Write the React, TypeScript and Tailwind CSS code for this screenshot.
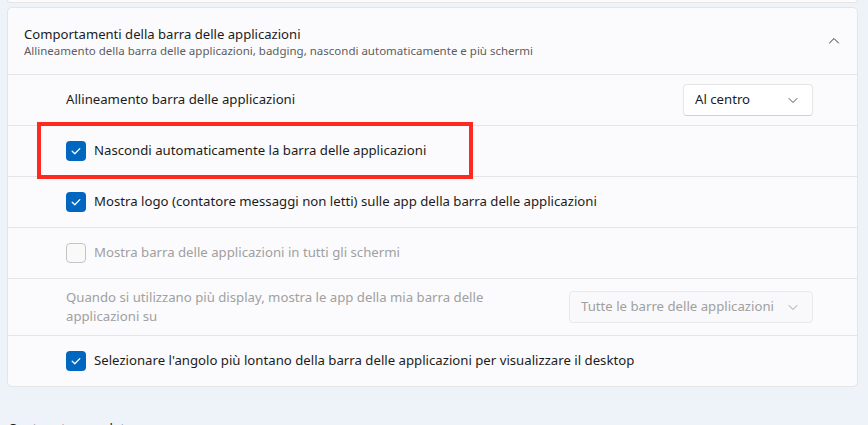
import React from "react";

// Impostazioni > Barra delle applicazioni — sezione "Comportamenti"

const FONT = "font-['Segoe_UI','Noto_Sans',sans-serif]";

function CheckIcon() {
  return (
    <svg width="12" height="12" viewBox="0 0 12 12" fill="none">
      <path d="M2.2 6.3 L4.8 8.8 L9.8 3.6" stroke="white" strokeWidth="1.3" strokeLinecap="round" strokeLinejoin="round" />
    </svg>
  );
}

function Chevron({ up = false, className = "" }: { up?: boolean; className?: string }) {
  return (
    <svg width="12" height="12" viewBox="0 0 12 12" fill="none" className={className}>
      <path
        d={up ? "M1.5 8 L6 3.5 L10.5 8" : "M2 4.5 L6 8.5 L10 4.5"}
        stroke="currentColor"
        strokeWidth="1"
        strokeLinecap="round"
        strokeLinejoin="round"
      />
    </svg>
  );
}

function Checkbox({ checked, disabled }: { checked: boolean; disabled?: boolean }) {
  if (checked) {
    return (
      <div className="w-5 h-5 rounded-[4px] bg-[#0067c0] flex items-center justify-center shrink-0">
        <CheckIcon />
      </div>
    );
  }
  return (
    <div
      className={
        "w-5 h-5 rounded-[4px] border shrink-0 " +
        (disabled ? "border-[#c4c4c4] bg-[#f9f9f9]" : "border-[#8a8a8a] bg-white")
      }
    />
  );
}

function CheckRow({ label, checked, disabled }: { label: string; checked: boolean; disabled?: boolean }) {
  return (
    <div className="h-[51px] border-t border-[#e5e5e5] flex items-center pl-[58px] gap-[8px]">
      <Checkbox checked={checked} disabled={disabled} />
      <span className={"text-[13.2px] " + (disabled ? "text-[#a0a0a0]" : "text-[#1b1b1b]")}>{label}</span>
    </div>
  );
}

export default function App() {
  return (
    <div className={"w-[868px] h-[425px] overflow-hidden bg-[#eef2f9] relative " + FONT}>
      {/* fine della scheda precedente */}
      <div className="ml-[7px] w-[851px] h-[3px] bg-[#fbfbfd] border-b border-x border-[#e5e5e5] rounded-b-[4px]" />

      <div className="ml-[7px] mt-[4px] w-[851px] bg-[#fbfbfd] border border-[#e5e5e5] rounded-[5px]">
        {/* intestazione */}
        <div className="h-[66px] flex items-center pl-[16px] pr-[17px]">
          <div className="flex-1 pt-[1px]">
            <div className="text-[13.1px] leading-[18px] text-[#1b1b1b]">Comportamenti della barra delle applicazioni</div>
            <div className="text-[11.5px] leading-[16px] text-[#5d5d5d]">
              Allineamento della barra delle applicazioni, badging, nascondi automaticamente e più schermi
            </div>
          </div>
          <Chevron up className="text-[#333]" />
        </div>

        {/* allineamento */}
        <div className="h-[51px] border-t border-[#e5e5e5] flex items-center pl-[58px] pr-[44px]">
          <span className="flex-1 text-[13.2px] text-[#1b1b1b]">Allineamento barra delle applicazioni</span>
          <div className="w-[130px] h-[32px] rounded-[4px] bg-white border border-[#e5e5e5] border-b-[#d0d0d0] flex items-center pl-[11px] pr-[13px]">
            <span className="flex-1 text-[13.2px] text-[#1b1b1b]">Al centro</span>
            <Chevron className="text-[#555]" />
          </div>
        </div>

        <CheckRow label="Nascondi automaticamente la barra delle applicazioni" checked />
        <CheckRow label="Mostra logo (contatore messaggi non letti) sulle app della barra delle applicazioni" checked />
        <CheckRow label="Mostra barra delle applicazioni in tutti gli schermi" checked={false} disabled />

        {/* più display */}
        <div className="h-[57px] border-t border-[#e5e5e5] flex items-center pl-[58px] pr-[44px]">
          <span className="flex-1 text-[13.2px] leading-[19px] text-[#a0a0a0] max-w-[460px]">
            Quando si utilizzano più display, mostra le app della mia barra delle applicazioni su
          </span>
          <div className="ml-auto w-[244px] h-[32px] rounded-[4px] bg-[#f9f9fb] border border-[#e8e8e8] flex items-center pl-[11px] pr-[13px]">
            <span className="flex-1 text-[13.2px] text-[#a0a0a0]">Tutte le barre delle applicazioni</span>
            <Chevron className="text-[#a0a0a0]" />
          </div>
        </div>

        <CheckRow label="Selezionare l'angolo più lontano della barra delle applicazioni per visualizzare il desktop" checked />
      </div>

      <div className="ml-[8px] mt-[32px] text-[13.2px] text-[#1b1b1b]">Contenuto correlato</div>

      {/* evidenziazione */}
      <div className="absolute left-[37px] top-[122px] w-[436px] h-[57px] border-[4px] border-[#ff2a1f]" />
    </div>
  );
}
